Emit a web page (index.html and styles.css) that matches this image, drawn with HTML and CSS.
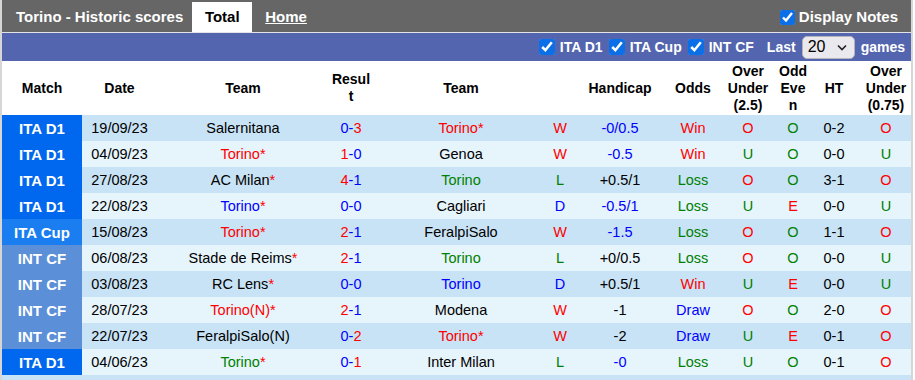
FILE: index.html
```html
<!DOCTYPE html>
<html lang="en">
<head>
    <meta charset="UTF-8">
    <meta name="viewport" content="width=device-width, initial-scale=1.0">
    <title>Torino - Historic scores</title>
    <link rel="stylesheet" href="styles.css">
</head>
<body>
    <div class="wrap">
        <div class="topbar">
            <span class="title">Torino - Historic scores</span>
            <span class="tab active">Total</span>
            <a class="tab link" href="#">Home</a>
            <label class="notes"><input type="checkbox" checked>Display Notes</label>
        </div>
        <div class="filterbar">
            <label><input type="checkbox" checked>ITA D1</label>
            <label><input type="checkbox" checked>ITA Cup</label>
            <label><input type="checkbox" checked>INT CF</label>
            <span class="last">Last</span>
            <span class="select">20
                <svg width="10" height="7" viewBox="0 0 10 7"><path d="M1 1.5 L5 5.5 L9 1.5" fill="none" stroke="#222" stroke-width="1.6"/></svg>
            </span>
            <span>games</span>
        </div>
        <table class="scores">
            <colgroup>
                <col class="c-match"><col class="c-date"><col class="c-home"><col class="c-res">
                <col class="c-away"><col class="c-wl"><col class="c-hcp"><col class="c-odds">
                <col class="c-ou"><col class="c-oe"><col class="c-ht"><col class="c-ou2">
            </colgroup>
            <thead>
                <tr>
                    <th>Match</th><th>Date</th><th>Team</th><th>Resul<br>t</th><th>Team</th><th></th>
                    <th>Handicap</th><th>Odds</th><th>Over<br>Under<br>(2.5)</th><th>Odd<br>Eve<br>n</th>
                    <th>HT</th><th>Over<br>Under<br>(0.75)</th>
                </tr>
            </thead>
            <tbody>
                <tr class="dark">
                    <td class="lg d1">ITA D1</td><td>19/09/23</td><td>Salernitana</td>
                    <td><span class="b">0</span><span class="b">-</span><span class="r">3</span></td>
                    <td class="r">Torino*</td><td class="r">W</td><td class="b">-0/0.5</td><td class="r">Win</td>
                    <td class="r">O</td><td class="g">O</td><td>0-2</td><td class="r">O</td>
                </tr>
                <tr>
                    <td class="lg d1">ITA D1</td><td>04/09/23</td><td class="r">Torino*</td>
                    <td><span class="r">1</span><span class="b">-0</span></td>
                    <td>Genoa</td><td class="r">W</td><td class="b">-0.5</td><td class="r">Win</td>
                    <td class="g">U</td><td class="g">O</td><td>0-0</td><td class="g">U</td>
                </tr>
                <tr class="dark">
                    <td class="lg d1">ITA D1</td><td>27/08/23</td><td>AC Milan<span class="r">*</span></td>
                    <td><span class="r">4</span><span class="b">-1</span></td>
                    <td class="g">Torino</td><td class="g">L</td><td>+0.5/1</td><td class="g">Loss</td>
                    <td class="r">O</td><td class="g">O</td><td>3-1</td><td class="r">O</td>
                </tr>
                <tr>
                    <td class="lg d1">ITA D1</td><td>22/08/23</td><td class="b">Torino<span class="r">*</span></td>
                    <td class="b">0-0</td>
                    <td>Cagliari</td><td class="b">D</td><td class="b">-0.5/1</td><td class="g">Loss</td>
                    <td class="g">U</td><td class="r">E</td><td>0-0</td><td class="g">U</td>
                </tr>
                <tr class="dark">
                    <td class="lg cup">ITA Cup</td><td>15/08/23</td><td class="r">Torino*</td>
                    <td><span class="r">2</span><span class="b">-1</span></td>
                    <td>FeralpiSalo</td><td class="r">W</td><td class="b">-1.5</td><td class="g">Loss</td>
                    <td class="r">O</td><td class="g">O</td><td>1-1</td><td class="r">O</td>
                </tr>
                <tr>
                    <td class="lg cf">INT CF</td><td>06/08/23</td><td>Stade de Reims<span class="r">*</span></td>
                    <td><span class="r">2</span><span class="b">-1</span></td>
                    <td class="g">Torino</td><td class="g">L</td><td>+0/0.5</td><td class="g">Loss</td>
                    <td class="r">O</td><td class="g">O</td><td>0-0</td><td class="g">U</td>
                </tr>
                <tr class="dark">
                    <td class="lg cf">INT CF</td><td>03/08/23</td><td>RC Lens<span class="r">*</span></td>
                    <td class="b">0-0</td>
                    <td class="b">Torino</td><td class="b">D</td><td>+0.5/1</td><td class="r">Win</td>
                    <td class="g">U</td><td class="r">E</td><td>0-0</td><td class="g">U</td>
                </tr>
                <tr>
                    <td class="lg cf">INT CF</td><td>28/07/23</td><td class="r">Torino(N)*</td>
                    <td><span class="r">2</span><span class="b">-1</span></td>
                    <td>Modena</td><td class="r">W</td><td>-1</td><td class="b">Draw</td>
                    <td class="r">O</td><td class="g">O</td><td>2-0</td><td class="r">O</td>
                </tr>
                <tr class="dark">
                    <td class="lg cf">INT CF</td><td>22/07/23</td><td>FeralpiSalo(N)</td>
                    <td><span class="b">0-</span><span class="r">2</span></td>
                    <td class="r">Torino*</td><td class="r">W</td><td>-2</td><td class="b">Draw</td>
                    <td class="g">U</td><td class="r">E</td><td>0-1</td><td class="r">O</td>
                </tr>
                <tr>
                    <td class="lg d1">ITA D1</td><td>04/06/23</td><td class="g">Torino<span class="r">*</span></td>
                    <td><span class="b">0-</span><span class="r">1</span></td>
                    <td>Inter Milan</td><td class="g">L</td><td class="b">-0</td><td class="g">Loss</td>
                    <td class="g">U</td><td class="g">O</td><td>0-1</td><td class="r">O</td>
                </tr>
                <tr class="dark">
                    <td colspan="12"></td>
                </tr>
            </tbody>
        </table>
    </div>
</body>
</html>
```

FILE: styles.css
```css
body {
    margin: 0;
    padding: 0;
    font-family: Arial, "Liberation Sans", sans-serif;
    background-color: #fff;
    color: #000;
}
.wrap {
    width: 909px;
    border-left: 2px solid #d6d6d6;
    border-right: 2px solid #d6d6d6;
}
.topbar {
    display: flex;
    align-items: flex-end;
    height: 32px;
    padding-left: 14px;
    background: #666;
    color: #fff;
    font-size: 15px;
    font-weight: bold;
    border-bottom: 1px solid #e4e4e4;
}
.topbar .title {
    line-height: 30px;
    margin-right: 9px;
}
.tab {
    display: block;
    line-height: 30px;
    padding: 0 12px;
}
.tab.active {
    background: #fff;
    color: #000;
    width: 36px;
    text-align: center;
}
.tab.link {
    color: #fff;
    text-decoration: underline;
    margin-left: 1px;
}
.notes {
    display: flex;
    align-items: center;
    margin-left: auto;
    margin-right: 13px;
    line-height: 30px;
}
input[type=checkbox] {
    width: 15px;
    height: 15px;
    margin: 0 4px 0 0;
    accent-color: #0b6fe8;
}
.filterbar {
    display: flex;
    align-items: center;
    justify-content: flex-end;
    gap: 6px;
    height: 28px;
    padding-right: 6px;
    background: #5265ae;
    color: #fff;
    font-size: 14px;
    font-weight: bold;
}
.filterbar label {
    display: flex;
    align-items: center;
}
.filterbar input[type=checkbox] {
    width: 16px;
    height: 16px;
    margin-right: 5px;
}
.filterbar .last {
    margin-left: 7px;
}
.select {
    display: flex;
    align-items: center;
    justify-content: space-between;
    box-sizing: border-box;
    width: 53px;
    height: 23px;
    padding: 0 7px 0 5px;
    background: #e9e9ee;
    border: 1px solid #b4b4bd;
    border-radius: 5px;
    color: #000;
    font-size: 16px;
    font-weight: normal;
}
.scores {
    width: 909px;
    table-layout: fixed;
    border-collapse: collapse;
    border-spacing: 0;
}
.c-match { width: 80px; }
.c-date { width: 75px; }
.c-home { width: 172px; }
.c-res { width: 44px; }
.c-away { width: 176px; }
.c-wl { width: 22px; }
.c-hcp { width: 98px; }
.c-odds { width: 48px; }
.c-ou { width: 62px; }
.c-oe { width: 28px; }
.c-ht { width: 54px; }
.c-ou2 { width: 50px; }
.scores th {
    height: 54px;
    padding: 0;
    font-size: 14px;
    line-height: 17px;
    text-align: center;
    vertical-align: middle;
}
.scores td {
    height: 26px;
    padding: 0;
    font-size: 14.5px;
    text-align: center;
    white-space: nowrap;
    background: #e6f4fc;
}
.scores tr.dark td {
    background: #c8e3f5;
}
.scores td.lg {
    color: #fff;
    font-weight: bold;
    font-size: 15px;
}
.scores tr td.d1 { background: #0068ee; }
.scores tr td.cup { background: #1a7ef0; }
.scores tr td.cf { background: #5b8fd7; }
.r { color: #f00; }
.b { color: #00f; }
.g { color: #008000; }
```
